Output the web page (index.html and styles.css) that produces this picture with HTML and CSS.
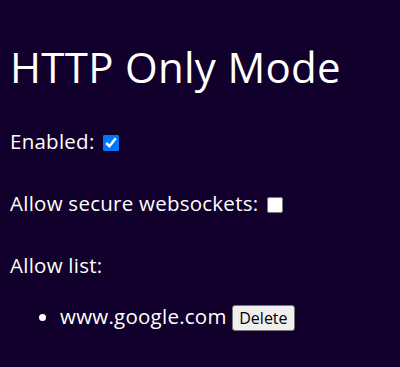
FILE: index.html
```html
<!DOCTYPE html>
<html lang="en">
<head>
<meta charset="utf-8">
<title>HTTP Only Mode</title>
<link rel="stylesheet" href="styles.css">
</head>
<body>
  <h1 class="title">HTTP Only Mode</h1>
  <div class="field">
    <label class="field-label" for="enabled">Enabled:</label>
    <input class="check" type="checkbox" id="enabled" checked>
  </div>
  <div class="field">
    <label class="field-label" for="wss">Allow secure websockets:</label>
    <input class="check" type="checkbox" id="wss">
  </div>
  <div class="field">Allow list:</div>
  <ul class="allow-list">
    <li class="allow-item">www.google.com <button class="delete-btn" type="button">Delete</button></li>
  </ul>
</body>
</html>
```

FILE: styles.css
```css
html, body {
  margin: 0;
  padding: 0;
}
body {
  background: #10002b;
  color: #ffffff;
  font-family: "Open Sans", "Noto Sans", sans-serif;
  font-size: 20.5px;
  letter-spacing: 0.25px;
  padding: 10px;
  height: 367px;
  box-sizing: border-box;
  overflow: hidden;
}
.title {
  font-size: 42px;
  font-weight: 400;
  letter-spacing: 0.3px;
  line-height: 53px;
  margin: 30px 0 0;
}
.field {
  line-height: 27px;
  margin-top: 35px;
}
.check {
  width: 16px;
  height: 16px;
  margin: 0 4px 0 3px;
  vertical-align: -2px;
}
.allow-list {
  margin: 24px 0 0;
  padding-left: 50px;
  line-height: 27px;
}
.delete-btn {
  font-family: "Open Sans", sans-serif;
  font-size: 16px;
  letter-spacing: 0;
  color: #000;
  background: #efefef;
  border: 1px solid #767676;
  border-radius: 3px;
  padding: 0 6px;
  height: 26px;
  line-height: 22px;
}
```
